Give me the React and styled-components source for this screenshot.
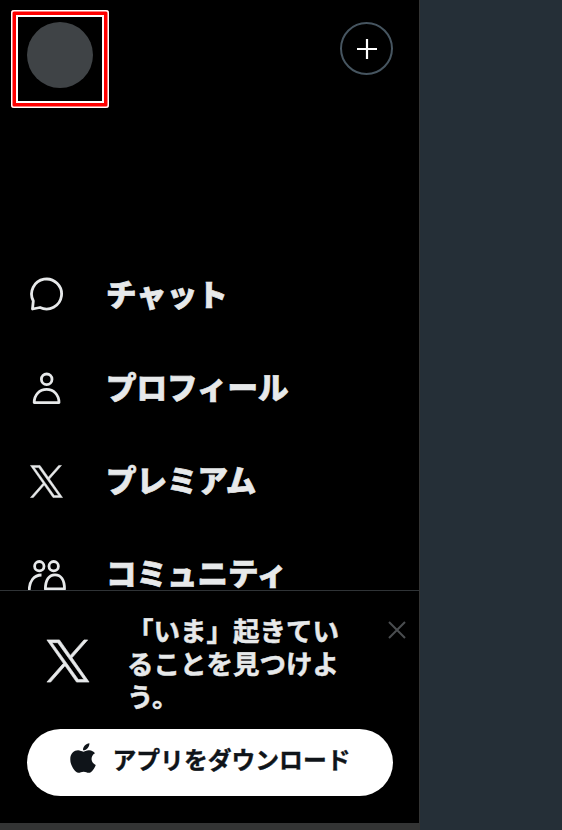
import styled, { createGlobalStyle } from 'styled-components';

const GlobalStyle = createGlobalStyle`
    html, body {
        margin: 0;
        padding: 0;
        background: #252f37;
    }
    * {
        box-sizing: border-box;
    }
`;

const Page = styled.div`
    width: 562px;
    height: 830px;
    overflow: hidden;
    font-family: "Noto Sans CJK JP", "Noto Sans", sans-serif;
    background: #252f37;
`;

const Column = styled.div`
    width: 420px;
    height: 830px;
    display: flex;
    flex-direction: column;
    background: #333434;
`;

const Drawer = styled.aside`
    width: 419px;
    height: 823px;
    display: flex;
    flex-direction: column;
    background: #000;
    color: #e7e9ea;
`;

const Header = styled.header`
    display: flex;
    justify-content: space-between;
    align-items: flex-start;
    padding: 10px 26px 0 11px;
    height: 240px;
    flex: none;
`;

const AvatarFrame = styled.div`
    width: 98px;
    height: 98px;
    padding: 12px 0 0 16px;
    border-radius: 3px;
    box-shadow: inset 0 0 0 1.5px #fff, inset 0 0 0 5px #f00, inset 0 0 0 7px #fff;
`;

const Avatar = styled.div`
    width: 66px;
    height: 66px;
    border-radius: 50%;
    background: #3f4346;
`;

const PlusButton = styled.button`
    width: 53px;
    height: 53px;
    margin-top: 12px;
    padding: 0;
    border: 2px solid #465560;
    border-radius: 50%;
    background: transparent;
    color: #fff;
    display: flex;
    align-items: center;
    justify-content: center;
`;

const Nav = styled.nav`
    flex: 1;
    min-height: 0;
    overflow: hidden;
    padding: 8px 0 0 29px;
`;

const NavRow = styled.div`
    height: 93px;
    display: flex;
    align-items: center;
`;

const NavIcon = styled.span`
    width: 78px;
    height: 40px;
    flex: none;
    display: flex;
    align-items: center;
    margin-top: ${props => props.$drop}px;
    margin-left: ${props => props.$nudge}px;
    margin-right: ${props => -props.$nudge}px;
`;

const NavLabel = styled.span`
    font-size: 30.5px;
    font-weight: 900;
    line-height: 40px;
    white-space: nowrap;
    margin-top: -4px;
    margin-left: -1px;
    -webkit-text-stroke: 0.7px #e7e9ea;
`;

const Banner = styled.section`
    height: 233px;
    flex: none;
    border-top: 1px solid #2f3336;
    padding: 21px 26px 0 27px;
    display: flex;
    flex-direction: column;
`;

const Pitch = styled.div`
    display: flex;
    align-items: center;
    height: 100px;
    margin-bottom: 17px;
    flex: none;
`;

const PitchLogo = styled.span`
    width: 100px;
    flex: none;
    display: flex;
    padding-left: 18px;
    margin-top: -2px;
`;

const PitchText = styled.p`
    margin: 0;
    width: 214px;
    flex: none;
    font-size: 26.5px;
    font-weight: 700;
    line-height: 33px;
    -webkit-text-stroke: 0.5px #e7e9ea;
`;

const CloseButton = styled.button`
    align-self: flex-start;
    flex: none;
    margin: 9px 0 0 47px;
    padding: 0;
    border: 0;
    background: transparent;
    color: #4a4d50;
    display: flex;
`;

const DownloadButton = styled.button`
    width: 366px;
    height: 67px;
    flex: none;
    border: 0;
    border-radius: 34px;
    background: #fff;
    color: #0f1419;
    font-family: inherit;
    font-size: 23.8px;
    font-weight: 700;
    -webkit-text-stroke: 0.4px #0f1419;
    display: flex;
    align-items: center;
    justify-content: center;
    gap: 17px;
    padding: 0 0 9px;
`;

const ChatIcon = () => (
    <svg width="36" height="36" viewBox="0 0 36 36" fill="none" stroke="currentColor" strokeWidth="2.8">
        <path d="M11 30.5 L3.5 32 L4.3 24 A15 15 0 1 1 11 30.5 Z" strokeLinejoin="round" />
    </svg>
);

const PersonIcon = () => (
    <svg width="34" height="34" viewBox="0 0 34 34" fill="none" stroke="currentColor" strokeWidth="2.8">
        <circle cx="17.7" cy="8.3" r="5.3" />
        <path d="M5.2 31.6 C5.2 24 10.5 18.4 17.6 18.4 C24.7 18.4 30 24 30 31.6 Z" strokeLinejoin="round" />
    </svg>
);

const CommunityIcon = () => (
    <svg width="38" height="40" viewBox="0 0 38 40" fill="none" stroke="currentColor" strokeWidth="2.8">
        <circle cx="11.3" cy="12.2" r="4.7" />
        <circle cx="25.7" cy="12.2" r="4.7" />
        <path d="M1.2 37 C1.2 27 6 21 13.5 21" />
        <path d="M17.4 35 C17.4 26 21 20.8 27 20.8 C33 20.8 36.5 26 36.5 35 Z" strokeLinejoin="round" />
    </svg>
);

const XLogo = ({ size }) => (
    <svg width={size} height={size} viewBox="0 0 24 24" fill="currentColor" stroke="currentColor" strokeWidth="0.35">
        <path d="M14.095 10.316 22.286 1h-1.94L13.23 9.088 7.551 1H1l8.59 12.231L1 23h1.94l7.51-8.543 6 8.543H23l-8.905-12.684zm-2.658 3.022-.872-1.218L3.64 2.432h2.98l5.59 7.821.869 1.219 7.265 10.166h-2.982l-5.926-8.3z" />
    </svg>
);

const AppleLogo = () => (
    <svg width="26" height="34" viewBox="0 0 384 512" fill="currentColor" preserveAspectRatio="none">
        <path d="M318.7 268.7c-.2-36.7 16.4-64.4 50-84.8-18.8-26.9-47.2-41.7-84.7-44.6-35.5-2.8-74.3 20.7-88.5 20.7-15 0-49.4-19.7-76.4-19.7C63.3 141.2 4 184.8 4 273.5q0 39.3 14.4 81.2c12.8 36.7 59 126.7 107.2 125.2 25.2-.6 43-17.9 75.8-17.9 31.8 0 48.3 17.9 76.4 17.9 48.6-.7 90.4-82.5 102.6-119.3-65.2-30.7-61.7-90-61.7-91.9zm-56.6-164.2c27.3-32.4 24.8-61.9 24-72.5-24.1 1.4-52 16.4-67.9 34.9-17.5 19.8-27.8 44.3-25.6 71.9 26.1 2 49.9-11.4 69.5-34.3z" />
    </svg>
);

const items = [
    { label: 'チャット', icon: <ChatIcon />, drop: 1, nudge: 0 },
    { label: 'プロフィール', icon: <PersonIcon />, drop: 1, nudge: 0 },
    { label: 'プレミアム', icon: <XLogo size={35} />, drop: 2, nudge: 0 },
    { label: 'コミュニティ', icon: <CommunityIcon />, drop: 0, nudge: -1 },
];

export default function App() {
    return (
        <Page>
            <GlobalStyle />
            <Column>
                <Drawer>
                    <Header>
                        <AvatarFrame>
                            <Avatar />
                        </AvatarFrame>
                        <PlusButton aria-label="add">
                            <svg width="20" height="20" viewBox="0 0 20 20" stroke="currentColor" strokeWidth="2.2">
                                <path d="M10 0v20M0 10h20" />
                            </svg>
                        </PlusButton>
                    </Header>
                    <Nav>
                        {items.map(item => (
                            <NavRow key={item.label}>
                                <NavIcon $drop={item.drop} $nudge={item.nudge}>{item.icon}</NavIcon>
                                <NavLabel>{item.label}</NavLabel>
                            </NavRow>
                        ))}
                    </Nav>
                    <Banner>
                        <Pitch>
                            <PitchLogo><XLogo size={46} /></PitchLogo>
                            <PitchText>「いま」起きている<wbr />ことを見つけよう。</PitchText>
                            <CloseButton aria-label="close">
                                <svg width="18" height="18" viewBox="0 0 18 18" stroke="currentColor" strokeWidth="2">
                                    <path d="M1 1l16 16M17 1L1 17" />
                                </svg>
                            </CloseButton>
                        </Pitch>
                        <DownloadButton>
                            <AppleLogo />
                            アプリをダウンロード
                        </DownloadButton>
                    </Banner>
                </Drawer>
            </Column>
        </Page>
    );
}
